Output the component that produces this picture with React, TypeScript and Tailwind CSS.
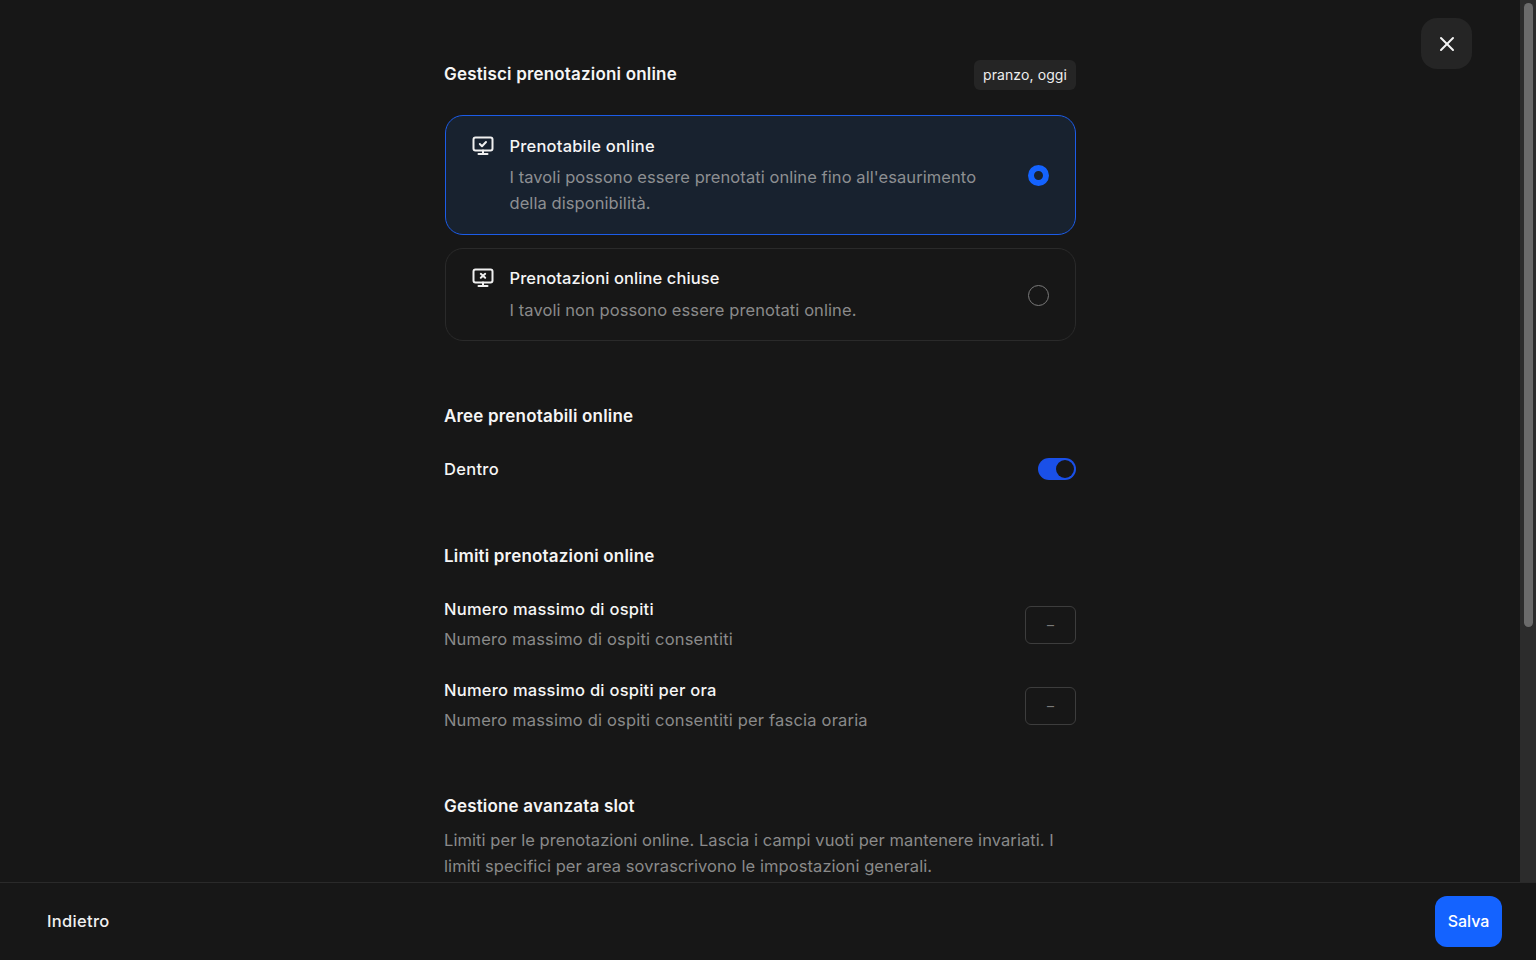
import React from 'react';
import { X } from 'lucide-react';

const MonitorCheck = () => (
  <svg width="22" height="20" viewBox="0 0 22 20" fill="none" stroke="currentColor" strokeWidth="2" strokeLinecap="round" strokeLinejoin="round">
    <rect x="1.5" y="1.5" width="19" height="13" rx="2" />
    <path d="M11 14.5v3.5M6.5 18h9" />
    <path d="M7.8 8l2.2 2.2 4-4.2" />
  </svg>
);

const MonitorX = () => (
  <svg width="22" height="20" viewBox="0 0 22 20" fill="none" stroke="currentColor" strokeWidth="2" strokeLinecap="round" strokeLinejoin="round">
    <rect x="1.5" y="1.5" width="19" height="13" rx="2" />
    <path d="M11 14.5v3.5M6.5 18h9" />
    <path d="M8.8 5.8l4.4 4M13.2 5.8l-4.4 4" />
  </svg>
);

const LimitRow = ({ title, desc }: { title: string; desc: string }) => (
  <div className="flex items-center justify-between h-[61px]">
    <div>
      <div className="text-[16.5px] tracking-[0.25px] leading-[26px] font-[450] text-[#f5f5f5]">{title}</div>
      <div className="mt-[4px] text-[16.5px] tracking-[0.19px] leading-[26px] text-[#8a8a8a]">{desc}</div>
    </div>
    <div className="mt-[2px] w-[51px] h-[38px] rounded-md border border-[#3d3d3d] flex items-center justify-center text-[14px] text-[#7a7a7a]">–</div>
  </div>
);

export default function App() {
  return (
    <div className="h-screen flex flex-col bg-[#171717] text-white font-['Inter','Liberation_Sans',sans-serif] overflow-hidden">
      <div className="flex-1 min-h-0 flex">
        <main className="relative flex-1 min-w-0 overflow-hidden">
          <button className="absolute top-[18px] right-[48px] w-[51px] h-[51px] rounded-2xl bg-[#252525] flex items-center justify-center text-[#f5f5f5]">
            <X size={24} strokeWidth={2} />
          </button>

          <div className="w-[632px] mx-auto pt-[60px]">
            <div className="flex items-center justify-between h-[30px]">
              <h2 className="text-[17px] tracking-[0.18px] font-semibold text-[#f5f5f5]">Gestisci prenotazioni online</h2>
              <span className="h-[30px] px-[9px] rounded-md bg-[#252525] text-[14px] tracking-[0.1px] leading-[30px] text-[#eeeeee]">pranzo, oggi</span>
            </div>

            <div className="mt-[25px] ml-[1px] flex flex-col gap-[13px]">
              <div className="flex items-center h-[120px] rounded-[18px] border border-[#1c5ce8] bg-[#18222f] pl-[25.5px] pr-[26px]">
                <div className="flex-1 flex gap-[16px] self-start pt-[17px]">
                  <span className="pt-[3px] text-[#f0f0f0]"><MonitorCheck /></span>
                  <div className="w-[480px]">
                    <div className="text-[16.5px] tracking-[0.2px] leading-[26px] font-[450] text-[#f5f5f5]">Prenotabile online</div>
                    <div className="mt-[6px] text-[16.5px] tracking-[0.07px] leading-[25.5px] text-[#8d8f92]">I tavoli possono essere prenotati online fino all'esaurimento della disponibilità.</div>
                  </div>
                </div>
                <span className="mt-[1px] w-[21px] h-[21px] rounded-full border-[6px] border-[#1463ff] bg-[#18222f]" />
              </div>

              <div className="flex items-center h-[93px] rounded-[18px] border border-[#2a2a2a] pl-[25.5px] pr-[26px]">
                <div className="flex-1 flex gap-[16px] self-start pt-[16px]">
                  <span className="pt-[3px] text-[#f0f0f0]"><MonitorX /></span>
                  <div>
                    <div className="text-[16.5px] tracking-[0.1px] leading-[26px] font-[450] text-[#f5f5f5]">Prenotazioni online chiuse</div>
                    <div className="mt-[6px] text-[16.5px] tracking-[0.08px] leading-[26px] text-[#8a8a8a]">I tavoli non possono essere prenotati online.</div>
                  </div>
                </div>
                <span className="mt-[1px] w-[21px] h-[21px] rounded-full border border-[#7a7a7a]" />
              </div>
            </div>

            <h2 className="mt-[62px] text-[17px] tracking-[0.18px] leading-[26px] font-semibold text-[#f5f5f5]">Aree prenotabili online</h2>
            <div className="mt-[27px] flex items-center justify-between h-[26px]">
              <span className="text-[16.5px] tracking-[0.3px] font-[450] text-[#f5f5f5]">Dentro</span>
              <span className="w-[38px] h-[22px] rounded-full bg-[#1a50e8] flex items-center justify-end pr-[2px]">
                <span className="w-[18px] h-[18px] rounded-full bg-[#171717]" />
              </span>
            </div>

            <h2 className="mt-[61px] text-[17px] tracking-[0.18px] leading-[26px] font-semibold text-[#f5f5f5]">Limiti prenotazioni online</h2>
            <div className="mt-[24px] flex flex-col gap-[20px]">
              <LimitRow title="Numero massimo di ospiti" desc="Numero massimo di ospiti consentiti" />
              <LimitRow title="Numero massimo di ospiti per ora" desc="Numero massimo di ospiti consentiti per fascia oraria" />
            </div>

            <h2 className="mt-[58px] text-[17px] tracking-[0.18px] leading-[26px] font-semibold text-[#f5f5f5]">Gestione avanzata slot</h2>
            <p className="mt-[9px] text-[16.5px] tracking-[0.07px] leading-[25.5px] text-[#8a8a8a]">Limiti per le prenotazioni online. Lascia i campi vuoti per mantenere invariati. I limiti specifici per area sovrascrivono le impostazioni generali.</p>
          </div>
        </main>

        {/* scrollbar */}
        <aside className="w-4 shrink-0 bg-[#2c2c2c] pl-[4px] pt-[3px]">
          <div className="w-[9px] h-[624px] rounded-full bg-[#6b6b6b]" />
        </aside>
      </div>

      <footer className="h-[78px] shrink-0 border-t border-[#2a2a2a] flex items-center justify-between pl-[47px] pr-[34px]">
        <button className="text-[16.5px] tracking-[0.3px] font-[450] text-[#f0f0f0]">Indietro</button>
        <button className="w-[67px] h-[51px] pb-[1px] rounded-xl bg-[#1463ff] text-[16px] font-medium text-white">Salva</button>
      </footer>
    </div>
  );
}
